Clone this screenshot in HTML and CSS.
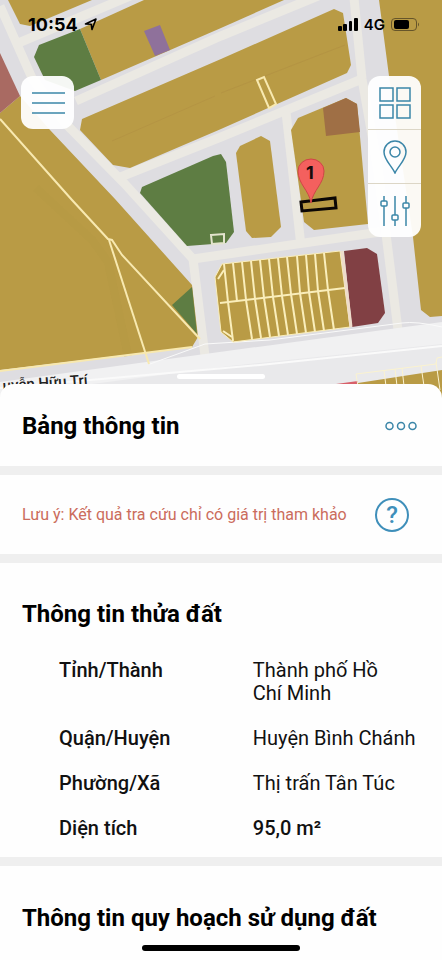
FILE: index.html
```html
<!DOCTYPE html>
<html lang="vi">

	<head>
		<meta charset="UTF-8">
		<meta name="viewport" content="width=device-width, initial-scale=1">
		<title>Bảng thông tin</title>
		<link rel="stylesheet" href="styles.css">
	</head>

	<body>
		<header class="map">
			<svg class="map-canvas" viewBox="0 0 442 404" preserveAspectRatio="xMidYMin slice" aria-hidden="true">
				<rect width="442" height="404" fill="#dedde1" />

				<!-- roads -->
				<g fill="none" stroke="#ebe9e3" stroke-width="9">
					<path d="M0 6 L32 78 L66 124 L124 183 L193 259 L206 364" />
					<path d="M16 44 L130 -4" />
					<path d="M76 101 L221 36 L318 -4" />
					<path d="M118 178 L221 137 L362 79" />
					<path d="M354 -2 L362 79 L378 170 L398 330" />
					<path d="M286 112 L301 246" />
					<path d="M193 259 L380 232" />
				</g>
				<path d="M0 382 L205 354 L442 322 V404 H0Z" fill="#f1f1f2" />
				<path d="M0 396 L230 366 L442 344 V404 H0Z" fill="#e9e9eb" />
				<path d="M0 388 L260 365 L442 346" fill="none" stroke="#fafafa" stroke-width="2" />

				<!-- land blocks -->
				<g fill="#b99b45">
					<path d="M8 0 H92 L30 26 L20 24Z" />
					<path d="M80 29 L144 0 H284 L221 28 L101 80Z" />
					<path d="M82 119 L221 59 L334 9 L343 13 L351 65 L347 73 L221 129 L130 168 L113 165 L80 130Z" />
					<path d="M20 96 L50 130 L115 199 L192 285 L198 337 L192 347 L0 370 V113Z" />
					<path d="M236 153 L240 146 L261 136 L270 141 L281 227 L271 237 L252 238 L246 231Z" />
					<path d="M291 130 L298 118 L346 98 L357 104 L368 224 L314 230 L304 222Z" />
					<path d="M379 0 H442 V316 L430 317 L421 310 L413 237 L389 76Z" />
					<path d="M222 264 L340 251 L350 327 L233 342 L221 332 L215 277Z" />
					<path d="M358 383 L442 370 V404 H358Z" />
				</g>
				<path d="M80 29 L101 80 L75 91 L45 80 L34 57 L39 45Z" fill="#5e7d43" />
				<path d="M140 193 L142 187 L213 156 L221 154 L226 162 L234 232 L226 243 L187 246Z" fill="#5e7d43" />
				<path d="M192 287 L197 334 L172 305Z" fill="#5e7d43" />
				<path d="M0 53 L20 96 L0 113Z" fill="#a96a62" />
				<path d="M144 31 L160 25 L170 50 L155 56Z" fill="#8f719b" />
				<path d="M323 108 L346 98 L357 104 L360 132 L326 136Z" fill="#9f6f45" />
				<path d="M344 251 L367 248 L377 254 L385 313 L378 323 L352 327Z" fill="#814044" />
				<path d="M336 384 L358 381 V386 H336Z" fill="#d8606a" />

				<!-- old canal, faint -->
				<path d="M36 188 L92 240 L108 262 L128 356" fill="none" stroke="#b39843" stroke-width="8" opacity=".4" />
				<path d="M221 93 L345 45 M112 141 L215 96" fill="none" stroke="#b08d42" opacity=".5" />

				<!-- parcel lines -->
				<g fill="none" stroke="#f8e9b0" stroke-width="2">
					<path d="M0 119 L72 200 L108 239 L112 240 L122 255 L200 339" />
					<path d="M109 240 L149 364" />
					<path d="M257 80 L264 77 L276 104 L269 108Z" />
					<path d="M0 371 L192 347" />
				</g>
				<path d="M211 235 L224 234 V243 L212 244Z" fill="none" stroke="#e3e4cd" stroke-width="2" />
				<path d="M150 364 L205 344 L270 340 L402 323 Q416 321 442 327" fill="none" stroke="#fafafa" />
				<g fill="none" stroke="#faeebb">
					<path d="M222 264 L340 251 L350 327 L233 342 L221 332 L215 277Z" />
					<path d="M218 279 L224 270 M223 331 L232 337" stroke-width="2" />
					<path d="M220 303 L345 288" stroke-width="2" />
					<path d="M224 264 L228 302 M233 263 L237 301 M242 262 L246 300 M251 261 L255 299 M260 260 L264 298 M269 259 L273 297 M278 258 L282 296 M287 257 L291 294 M297 256 L300 293 M306 255 L309 292 M315 254 L318 291 M324 253 L328 290" stroke-width="2" />
					<path d="M228 302 L233 341 M246 300 L252 339 M255 299 L261 338 M264 298 L270 337 M273 297 L279 336 M282 296 L288 335 M291 294 L297 334 M300 293 L306 333 M309 292 L315 332 M318 291 L324 331 M328 290 L334 330" stroke-width="2" />
				</g>
				<path d="M342 251 L351 327" fill="none" stroke="#eedccb" stroke-width="3" />
				<path d="M358 386 L356 374 L436 364 L437 358 L442 357 M384 371 L386 386 M395 369 L397 386 M402 368 L404 386 M421 366 L424 386 M436 362 L440 390" fill="none" stroke="#fbf3d0" />

				<text class="street" transform="translate(88 385) rotate(-4)" text-anchor="end">uyễn Hữu Trí</text>

				<!-- selected parcel and its pin -->
				<path d="M301 202 L335 198 L336 208 L302 211Z" fill="none" stroke="#0b0705" stroke-width="3" />
				<path d="M311 203 C309 190 298 184 298 171 A13 12 0 0 1 324 171 C324 184 313 190 311 203Z" fill="#f4605e" stroke="#cf4547" />
				<text class="pin-label" x="310" y="179" text-anchor="middle">1</text>
			</svg>

			<div class="status">
				<div class="status-left">
					<span>10:54</span>
					<svg width="14" height="14" viewBox="0 0 14 14" aria-hidden="true"><path d="M1.500 7 L12 2 L8 12.500 L7.200 7.200Z" fill="none" stroke="#000" stroke-width="1.600" stroke-linejoin="round" /></svg>
				</div>
				<div class="status-right">
					<svg width="20" height="13" viewBox="0 0 20 13" aria-hidden="true"><rect y="8" width="4" height="5" rx="1" /><rect x="5" y="6" width="4" height="7" rx="1" /><rect x="11" y="3" width="3" height="10" rx="1" /><rect x="16" width="4" height="13" rx="1" /></svg>
					<span class="network">4G</span>
					<svg width="29" height="13" viewBox="0 0 29 13" aria-hidden="true"><rect x=".5" y=".5" width="25" height="12" rx="3.500" fill="none" stroke="#66552a" /><rect x="3" y="2" width="15" height="9" rx="2" /><path d="M27 4.500q2 2 0 4z" fill="#66552a" /></svg>
				</div>
			</div>

			<div class="map-controls">
				<button class="map-button menu" type="button" aria-label="Menu">
					<svg width="34" height="34" viewBox="0 0 34 34"><path d="M1 7h33M1 17h33M1 27h33" /></svg>
				</button>
				<div class="toolbar">
					<button class="map-button" type="button" aria-label="Lớp bản đồ">
						<svg width="34" height="34" viewBox="0 0 34 34"><path d="M2 2h13v13H2z M19 2h13v13H19z M2 19h13v13H2z M19 19h13v13H19z" /></svg>
					</button>
					<button class="map-button" type="button" aria-label="Vị trí">
						<svg width="34" height="34" viewBox="0 0 34 34"><path d="M17 33C14 26 6 20 6 12a11 11 0 0 1 22 0c0 8-8 14-11 21z" /><circle cx="17" cy="12" r="5" /></svg>
					</button>
					<button class="map-button" type="button" aria-label="Bộ lọc">
						<svg width="34" height="34" viewBox="0 0 34 34"><path d="M6 2v5M6 12v20M17 2v19M17 26v6M28 2v7M28 14v18" /><rect x="3" y="7" width="6" height="5" rx="1" /><rect x="14" y="21" width="6" height="5" rx="1" /><rect x="25" y="9" width="6" height="5" rx="1" /></svg>
					</button>
				</div>
			</div>
			<span class="handle"></span>
		</header>

		<main class="sheet">
			<section class="sheet-title">
				<h1>Bảng thông tin</h1>
				<button class="icon-button" type="button" aria-label="Thêm">
					<svg width="32" height="10" viewBox="0 0 32 10"><circle cx="4.500" cy="5" r="3.500" /><circle cx="16" cy="5" r="3.500" /><circle cx="27.500" cy="5" r="3.500" /></svg>
				</button>
			</section>

			<section class="notice">
				<p>Lưu ý: Kết quả tra cứu chỉ có giá trị tham khảo</p>
				<button class="help" type="button" aria-label="Trợ giúp">?</button>
			</section>

			<section class="parcel">
				<h2>Thông tin thửa đất</h2>
				<table>
					<tr>
						<th scope="row">Tỉnh/Thành</th>
						<td>Thành phố Hồ Chí&nbsp;Minh</td>
					</tr>
					<tr>
						<th scope="row">Quận/Huyện</th>
						<td>Huyện Bình Chánh</td>
					</tr>
					<tr>
						<th scope="row">Phường/Xã</th>
						<td>Thị trấn Tân Túc</td>
					</tr>
					<tr>
						<th scope="row">Diện tích</th>
						<td class="area">95,0 m²</td>
					</tr>
				</table>
			</section>

			<section class="planning">
				<h2>Thông tin quy hoạch sử dụng đất</h2>
			</section>
		</main>
		<div class="home-bar"></div>
	</body>

</html>
```

FILE: styles.css
```css
* {
	margin: 0;
	padding: 0;
	box-sizing: border-box;
}

body {
	position: relative;
	min-height: 100vh;
	background-color: #fefefe;
	font-family: Roboto, "Liberation Sans", sans-serif;
	color: #111;
}

button {
	border: 0;
	background: none;
	cursor: pointer;
}

/* map */
.map {
	position: relative;
	height: 400px;
	overflow: hidden;
}

.map-canvas {
	position: absolute;
	top: 0;
	left: 0;
	width: 100%;
	height: 404px;
}

.street {
	font-size: 15px;
	font-weight: 500;
	fill: #222;
}

.pin-label {
	font-family: Inter, Roboto, sans-serif;
	font-size: 18px;
	font-weight: bold;
	fill: #1a0b0b;
}

.status {
	position: relative;
	display: flex;
	justify-content: space-between;
	align-items: center;
	height: 48px;
	padding: 0 22px 0 28px;
	font-family: Inter, Roboto, sans-serif;
	font-size: 18px;
	font-weight: 700;
	color: #000;
}

.status-left,
.status-right {
	display: flex;
	align-items: center;
	gap: 6px;
}

.network {
	font-size: 15px;
	font-weight: 600;
}

.map-controls {
	position: relative;
	display: flex;
	justify-content: space-between;
	align-items: flex-start;
	padding: 28px 21px 0;
}

.map-button {
	display: flex;
	justify-content: center;
	align-items: center;
	width: 53px;
	height: 53px;
}

.map-button svg,
.icon-button svg {
	fill: none;
	stroke: #3b86a8;
	stroke-width: 1.5;
}

.menu,
.toolbar {
	border-radius: 12px;
	background-color: rgba(255, 255, 255, .94);
}

.toolbar .map-button + .map-button {
	height: 54px;
	border-top: 1px solid #dcd6c6;
}

.handle {
	position: absolute;
	top: 374px;
	left: 50%;
	width: 88px;
	height: 5px;
	margin-left: -44px;
	border-radius: 3px;
	background-color: #fff;
}

/* information sheet */
.sheet {
	position: relative;
	margin-top: -16px;
	border-radius: 14px 14px 0 0;
	background-color: #fefefe;
}

.sheet section {
	padding: 0 22px;
}

.sheet section + section {
	border-top: 9px solid #efefef;
}

h1,
h2 {
	font-size: 24px;
	line-height: 28px;
	font-weight: 700;
	color: #000;
}

.sheet-title,
.notice {
	display: flex;
	justify-content: space-between;
	align-items: center;
}

.sheet .sheet-title {
	height: 82px;
	padding-top: 2px;
}

.icon-button {
	display: flex;
	padding: 4px 3px;
}

.notice {
	height: 88px;
}

.notice p {
	font-size: 16px;
	line-height: 24px;
	color: #cb6c5c;
}

.help {
	width: 34px;
	height: 34px;
	margin-right: 11px;
	border: 2px solid #3f8fba;
	border-radius: 50%;
	font-family: Roboto, sans-serif;
	font-size: 24px;
	line-height: 28px;
	font-weight: 500;
	color: #3f8fba;
}

.sheet .parcel {
	padding-top: 37px;
	padding-bottom: 6px;
}

table {
	width: 100%;
	margin-top: 20px;
	border-collapse: collapse;
	table-layout: fixed;
}

th,
td {
	padding: 11px 0;
	font-size: 20px;
	line-height: 23px;
	text-align: left;
	vertical-align: top;
	font-weight: 400;
}

th {
	width: 58%;
	padding-left: 37px;
	font-weight: 500;
}

.area {
	font-weight: 500;
}

.sheet .planning {
	padding-top: 38px;
	padding-bottom: 28px;
}

.home-bar {
	position: absolute;
	bottom: 9px;
	left: 50%;
	width: 158px;
	height: 6px;
	margin-left: -79px;
	border-radius: 3px;
	background-color: #000;
}
```
